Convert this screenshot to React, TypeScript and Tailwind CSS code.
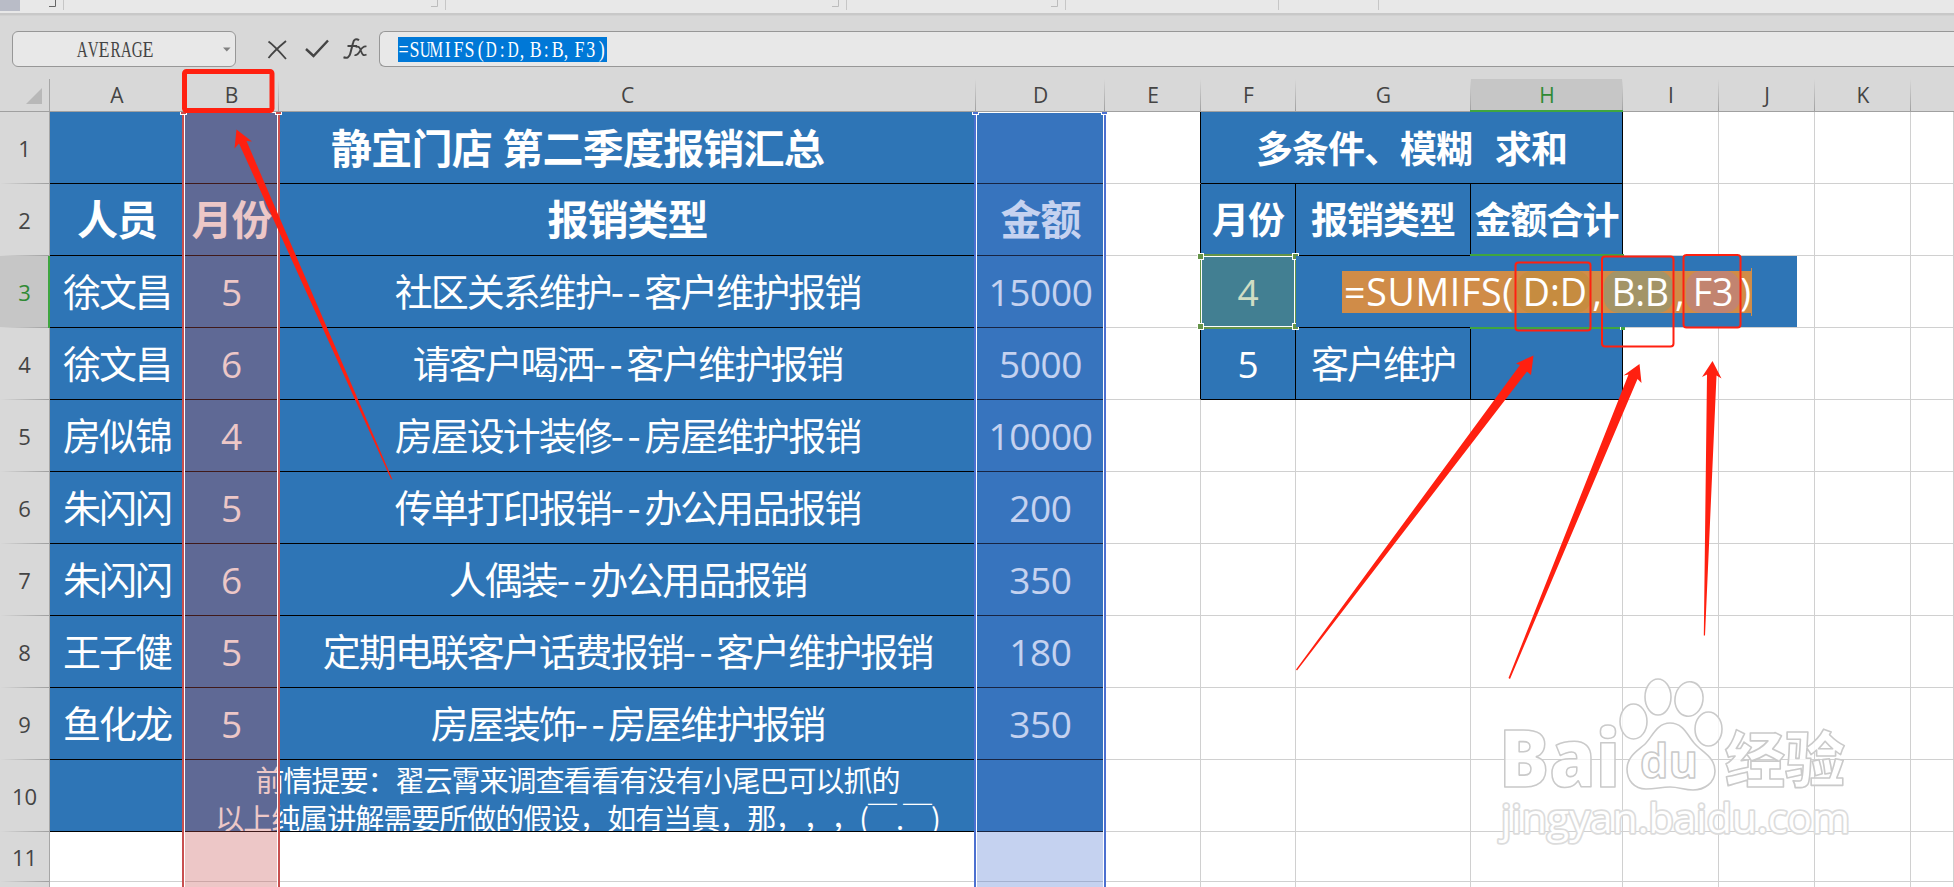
import type { ReactNode } from 'react'
import clsx from 'clsx'

const COLS = 'grid grid-cols-[50px_134px_95px_697px_129px_96px_95px_175px_152px_96px_96px_96px_43px]'
const SANS = "font-['Open_Sans','Noto_Sans_CJK_SC',sans-serif]"
const LETTERS = ['A', 'B', 'C', 'D', 'E', 'F', 'G', 'H', 'I', 'J', 'K']

const RECORDS = [
  { name: '徐文昌', month: '5', type: '社区关系维护--客户维护报销', amount: '15000' },
  { name: '徐文昌', month: '6', type: '请客户喝洒--客户维护报销', amount: '5000' },
  { name: '房似锦', month: '4', type: '房屋设计装修--房屋维护报销', amount: '10000' },
  { name: '朱闪闪', month: '5', type: '传单打印报销--办公用品报销', amount: '200' },
  { name: '朱闪闪', month: '6', type: '人偶装--办公用品报销', amount: '350' },
  { name: '王子健', month: '5', type: '定期电联客户话费报销--客户维护报销', amount: '180' },
  { name: '鱼化龙', month: '5', type: '房屋装饰--房屋维护报销', amount: '350' },
]

interface CellProps {
  children?: ReactNode;
  className?: string;
}

// Empty sheet cell with light grid lines
function Blank({ className }: CellProps) {
  return <div className={clsx('border-r border-b border-[#d0d0d0]', className)} />
}

// Filled cell of the left table, no vertical borders
function Data({ children, className }: CellProps) {
  return (
    <div
      className={clsx(
        'flex items-center justify-center overflow-hidden whitespace-nowrap border-b border-black bg-[#2e75b6] text-white',
        className
      )}
    >
      {children}
    </div>
  )
}

function Num({ children }: CellProps) {
  return <span className="text-[37px] tracking-[-0.4px]">{children}</span>
}

// The double hyphen is set wider than the characters around it
function Han({ text }: { text: string }) {
  const [head, tail] = text.split('--')
  return (
    <span className="pb-[3px] font-['Noto_Sans_CJK_SC',sans-serif] text-[38px] leading-none tracking-[-2px]">
      {head}
      {tail && <span className="tracking-[3.5px]">--</span>}
      {tail}
    </span>
  )
}

function RowHeader({ n, active }: { n?: number; active?: boolean }) {
  return (
    <div
      className={clsx(
        'relative flex items-center justify-center border-r text-[22px]',
        active ? 'border-[#3fa540] bg-[#c6c6c6] text-[#2f8a34]' : 'border-[#a6a6a6] bg-[#d8d8d8] text-[#444]'
      )}
    >
      {n}
      <span className="absolute inset-x-0 bottom-0 h-px bg-linear-to-r from-[#d8d8d8] to-[#9f9f9f]" />
      {active && <span className="absolute top-0 right-0 bottom-0 w-px bg-[#3fa540]" />}
    </div>
  )
}

function Blanks({ count }: { count: number }) {
  return (
    <>
      {Array.from({ length: count }, (_, i) => (
        <Blank key={i} />
      ))}
    </>
  )
}

// Fixed-pitch text, one 11px slot per character
function Pitch({ text }: { text: string }) {
  return (
    <span className="flex font-['Liberation_Serif',serif] text-[23px] leading-[25px]">
      {text.split('').map((c, i) => (
        <span key={i} className={clsx('flex w-[11px]', c === ',' ? 'justify-start' : 'justify-center')}>
          <span className={/[AGDRVMU]/.test(c) ? 'scale-x-[0.66]' : 'scale-x-[0.78]'}>{c}</span>
        </span>
      ))}
    </span>
  )
}

function Ribbon() {
  return (
    <div className="h-[17px] shrink-0 bg-[#d8d8d8]">
      <svg width="1954" height="17" viewBox="0 0 1954 17" className="block">
        <rect width="1954" height="13" fill="#e8e8e8" />
        <rect y="13" width="1954" height="2" fill="#c8c8c8" />
        <rect y="15" width="1954" height="1" fill="#d1d1d1" />
        <rect width="20" height="11" fill="#b9bcc7" />
        <path d="M49 6.5H55.5V0" fill="none" stroke="#666" />
        <path d="M431 6.5H437.5V0M832 6.5H838.5V0M1051 6.5H1057.5V0" fill="none" stroke="#bcbcbc" />
        <path d="M63.5 0V10M445.5 0V10M846.5 0V10M1065.5 0V10M1278.5 0V10M1378.5 0V10" stroke="#c6c6c6" />
      </svg>
    </div>
  )
}

function FormulaBar() {
  return (
    <div className="flex h-[62px] shrink-0 items-start bg-[#d8d8d8] pt-[14px] pl-3 text-[#444]">
      <div className="flex h-9 w-[224px] items-center justify-between rounded-[6px] border border-[#979797] bg-[#e8e8e8] pr-1 pl-[64px]">
        <Pitch text="AVERAGE" />
        <svg width="8" height="5" viewBox="0 0 8 5">
          <path d="M0 .5H7.5L3.8 4.5Z" fill="#808080" />
        </svg>
      </div>
      <svg width="110" height="36" viewBox="262 31 110 36" className="ml-[26px]" fill="none" stroke="#444">
        <path d="M268.5 41.5C272 44 279 51 286 59" strokeWidth="1.8" />
        <path d="M286 41C280 46 274 51 268.5 58" strokeWidth="1.8" />
        <path d="M306 49L313.500 56L328 40.500" strokeWidth="2.4" />
        <path d="M359 40.300C356.500 38.200 353.800 39.200 353 43L350.300 53.500C349.300 57.300 347.200 58.500 343.500 57.200M347.500 46H357" strokeWidth="2" />
        <path d="M355.500 47C359 45.500 360 48 361.200 51.500S363.500 56 366.500 54.500M366.500 46.500C363 45.500 361.500 48.500 360 51S357 56 354.500 55" strokeWidth="1.8" />
      </svg>
      <div className="ml-[7px] flex h-9 flex-1 items-center rounded-l-[6px] border border-r-0 border-[#979797] bg-[#e8e8e8] pl-[18px]">
        <span className="bg-[#0078d7] text-white">
          <Pitch text="=SUMIFS(D:D,B:B,F3)" />
        </span>
      </div>
    </div>
  )
}

function ColumnHeaders() {
  return (
    <div className={clsx(COLS, 'h-[33px] shrink-0 border-b border-[#a0a0a0] bg-[#d8d8d8] text-[21px] text-[#444]')}>
      <div className="flex items-end justify-end border-r border-[#a6a6a6] pr-[7px] pb-[7px]">
        <svg width="16" height="16" viewBox="0 0 16 16">
          <path d="M16 0V16H0Z" fill="#b8b8b8" />
        </svg>
      </div>
      {LETTERS.map(l => (
        <div
          key={l}
          className={clsx(
            'relative flex items-center justify-center leading-none',
            l === 'H' && 'bg-[#c6c6c6] text-[#2f8a34]'
          )}
        >
          {l}
          <span className="absolute top-0 right-0 bottom-0 w-px bg-linear-to-b from-[#d8d8d8] to-[#a0a0a0]" />
        </div>
      ))}
    </div>
  )
}

function Sheet() {
  const tall = clsx(COLS, 'h-[72px]')
  return (
    <div className="bg-white">
      <div className={tall}>
        <RowHeader n={1} />
        <Data className="col-span-4 text-[41px] font-bold tracking-[-0.8px]">
          <span className="pb-[3px] font-['Noto_Sans_CJK_SC',sans-serif] leading-none [word-spacing:2px]">静宜门店 第二季度报销汇总</span>
        </Data>
        <Blank className="border-r-black" />
        <Data className="col-span-3 border-r text-[37px] font-bold tracking-[-1px]">
          <span className="font-['Noto_Sans_CJK_SC',sans-serif] whitespace-pre [word-spacing:4px]">多条件、模糊  求和</span>
        </Data>
        <Blanks count={4} />
      </div>
      <div className={tall}>
        <RowHeader n={2} />
        {['人员', '月份', '报销类型', '金额'].map(t => (
          <Data key={t} className="text-[41px] font-bold tracking-[-1px]">{t}</Data>
        ))}
        <Blank className="border-r-black" />
        {['月份', '报销类型', '金额合计'].map(t => (
          <Data key={t} className="border-r text-[37px] font-bold tracking-[-1px]">{t}</Data>
        ))}
        <Blanks count={4} />
      </div>
      {RECORDS.map((r, i) => (
        <div key={i} className={tall}>
          <RowHeader n={i + 3} active={i === 0} />
          <Data><Han text={r.name} /></Data>
          <Data><Num>{r.month}</Num></Data>
          <Data><Han text={r.type} /></Data>
          <Data><Num>{r.amount}</Num></Data>
          {i > 1 ? (
            <Blanks count={8} />
          ) : (
            <>
              <Blank className="border-r-black" />
              <Data className="border-r"><Num>{i === 0 ? '4' : '5'}</Num></Data>
              <Data className="border-r">{i === 1 && <Han text="客户维护" />}</Data>
              <Data className="border-r" />
              <Blanks count={4} />
            </>
          )}
        </div>
      ))}
      <div className={tall}>
        <RowHeader n={10} />
        <Data className="col-span-4">
          <div className="pt-[4px] text-center font-['Noto_Sans_CJK_SC',sans-serif] text-[29px] leading-[38px] tracking-[-1px] [text-spacing-trim:space-all]">
            <div>前情提要：翟云霄来调查看看有没有小尾巴可以抓的</div>
            <div>以上纯属讲解需要所做的假设，如有当真，那，，，(￣.￣)</div>
          </div>
        </Data>
        <Blanks count={8} />
      </div>
      <div className={clsx(COLS, 'h-[50px]')}>
        <RowHeader n={11} />
        <Blanks count={12} />
      </div>
      <div className={clsx(COLS, 'h-[72px]')}>
        <RowHeader />
        <Blanks count={12} />
      </div>
    </div>
  )
}

// In-cell editor that spills over the neighbours of H3
function CellEditor() {
  return (
    <div className="absolute top-[256px] left-[1296px] flex h-[71px] w-[501px] items-center bg-[#2e75b6] pl-[46px]">
      <div className="flex h-[42px] w-[409px] items-center bg-[#d08c48] pl-[2px] text-[37.5px] leading-none whitespace-nowrap text-white">
        <span className="w-[174px] tracking-[0.7px]">=SUMIFS(</span>
        <span className="flex h-[42px] w-[74px] items-center justify-center rounded-[15px] bg-[#c68c40] pl-[2px]">D:D</span>
        <span className="w-[13px] text-center">,</span>
        <span className="flex h-[42px] w-[70px] items-center justify-center rounded-[15px] bg-[#a39467] pl-[3px] tracking-[-0.5px]">B:B</span>
        <span className="w-[13px] text-center">,</span>
        <span className="flex h-[42px] w-[54px] items-center justify-center rounded-[15px] bg-[#c28470]">F3</span>
        <span>)</span>
      </div>
      <div className="h-[48px] w-px bg-[#d08c48]" />
    </div>
  )
}

function Handle({ className }: CellProps) {
  return <span className={clsx('absolute size-[7px] border border-white', className)} />
}

function Highlights() {
  return (
    <>
      <div className="absolute top-[112px] left-[182px] h-[775px] w-[98px] border-x-2 border-[#c85050]">
        <div className="h-full border border-b-0 border-white bg-[rgba(200,80,80,0.32)] bg-clip-padding" />
        <Handle className="-top-[4px] -left-[4px] bg-[#c85050] [clip-path:inset(4px_0_0_0)]" />
        <Handle className="-top-[4px] -right-[4px] bg-[#c85050] [clip-path:inset(4px_0_0_0)]" />
      </div>
      <div className="absolute top-[112px] left-[974px] h-[775px] w-[132px] border-x-2 border-[#4c70d0]">
        <div className="h-full border border-b-0 border-white bg-[rgba(75,115,209,0.32)] bg-clip-padding" />
        <Handle className="-top-[4px] -left-[4px] bg-[#4c70d0] [clip-path:inset(4px_0_0_0)]" />
        <Handle className="-top-[4px] -right-[4px] bg-[#4c70d0] [clip-path:inset(4px_0_0_0)]" />
      </div>
      <div className="absolute top-[254px] left-[1200px] h-[75px] w-[96px] border-x border-y-2 border-[#659448]">
        <div className="h-full border border-white bg-[rgba(109,150,72,0.32)] bg-clip-padding" />
        <Handle className="-top-[3px] -left-[4px] bg-[#659448]" />
        <Handle className="-top-[3px] -right-[4px] bg-[#659448]" />
        <Handle className="-bottom-[3px] -left-[4px] bg-[#659448]" />
        <Handle className="-right-[4px] -bottom-[3px] bg-[#659448]" />
      </div>
      <div className="absolute top-[110px] left-[1470px] h-[2px] w-[153px] bg-[#3fa540]" />
      <div className="absolute top-[254px] left-[1470px] h-[2px] w-[154px] bg-[#3fa540]" />
      <div className="absolute top-[327px] left-[1470px] h-[2px] w-[150px] bg-[#3fa540]" />
      <div className="absolute top-[326px] left-[1620px] h-[4px] w-[5px] border-l border-white bg-[#3fa540]" />
    </>
  )
}

function Watermark() {
  return (
    <svg
      className="absolute top-[670px] left-[1490px]"
      width="370"
      height="185"
      viewBox="1490 670 370 185"
      fill="#fff"
      fillOpacity="0.8"
      stroke="#cacaca"
      strokeWidth="1.6"
      strokeLinejoin="round"
    >
      <text x="1499" y="787" fontFamily="Open Sans" fontWeight="800" fontSize="80" textLength="121" lengthAdjust="spacingAndGlyphs">Bai</text>
      <ellipse cx="1633.500" cy="721.500" rx="13.500" ry="17.500" />
      <ellipse cx="1658" cy="697" rx="13" ry="18" />
      <ellipse cx="1689" cy="699" rx="14" ry="17.300" transform="rotate(8 1689 699)" />
      <ellipse cx="1708.500" cy="729" rx="13.500" ry="17" />
      <path d="M1670 723C1684 723 1688 737 1695 744C1702 752 1715 757 1715 771C1715 783 1704 790 1693 790C1684 790 1679 787 1670 787C1661 787 1656 789 1646 789C1634 789 1627 780 1627 769C1627 757 1637 751 1644 745C1652 738 1656 723 1670 723Z" />
      <text x="1640" y="778" fontFamily="Open Sans" fontWeight="bold" fontSize="47" textLength="58" lengthAdjust="spacingAndGlyphs">du</text>
      <text x="1725" y="782" fontFamily="Noto Sans CJK SC" fontWeight="900" fontSize="60" textLength="120">经验</text>
      <text x="1501" y="833" fontFamily="Open Sans" fontWeight="400" fontSize="40" textLength="349" lengthAdjust="spacingAndGlyphs" stroke="#dcdcdc" strokeWidth="3.500" paintOrder="stroke" fillOpacity="1">jingyan.baidu.com</text>
    </svg>
  )
}

function Annotations() {
  return (
    <svg className="absolute top-0 left-0" width="1954" height="887" viewBox="0 0 1954 887">
      <g fill="none" stroke="#ff2010" strokeWidth="2">
        <rect x="184.500" y="71.500" width="87.500" height="39" rx="2" strokeWidth="5" />
        <rect x="1515.500" y="262.500" width="75" height="68" rx="3" />
        <rect x="1602" y="256.500" width="71.500" height="90" rx="3" />
        <rect x="1683.500" y="255" width="57" height="72.500" rx="3" />
      </g>
      <g fill="#ff2010">
        <path d="M236.500 129.500L252 141.500L246.500 141L392.500 479.500L391 479L239 143.500L234.500 148.500Z" />
        <path d="M1533.500 355.500L1531 375L1527 371.500L1297 670.500L1296 669.500L1520 365L1516 363.500Z" />
        <path d="M1639.500 364L1641.500 383L1637.500 379L1510 679L1508.500 678L1628.500 374.500L1623.500 375.500Z" />
        <path d="M1712.500 361L1721.500 378.500L1716.500 375.500L1705 635.500H1703.800L1707 374.500L1702 377Z" />
      </g>
    </svg>
  )
}

export default function App() {
  return (
    <div className={clsx(SANS, 'relative flex h-[887px] w-[1954px] flex-col overflow-hidden bg-white')}>
      <Ribbon />
      <FormulaBar />
      <ColumnHeaders />
      <Sheet />
      <Highlights />
      <CellEditor />
      <Watermark />
      <Annotations />
    </div>
  )
}
